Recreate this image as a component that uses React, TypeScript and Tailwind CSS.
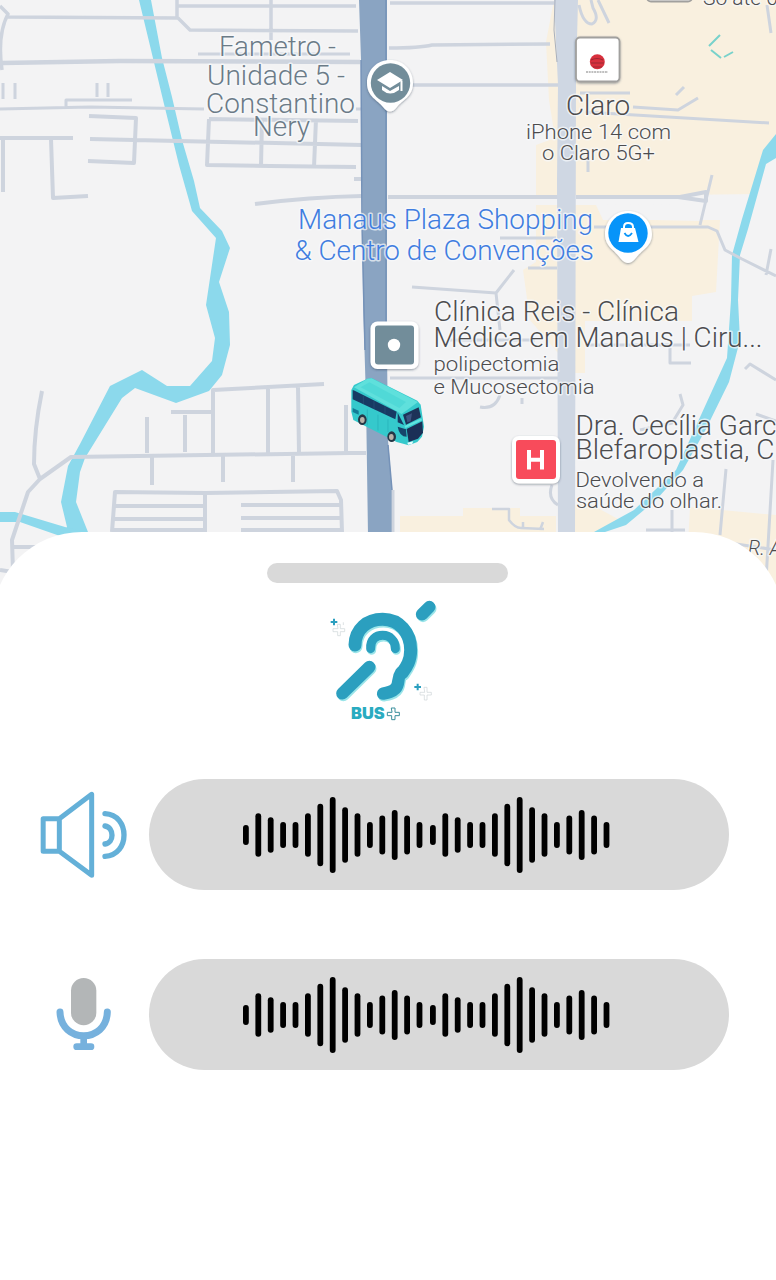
import React from "react";

type LabelProps = {
  x: number;
  y: number;
  w?: number;
  size?: number;
  tone?: "grey" | "blue" | "dark";
  children: string;
};

const TONES = { grey: "#6b7b87", blue: "#3f7de0", dark: "#4c4c4e" };

function Label({ x, y, w, size = 27, tone = "dark", children }: LabelProps) {
  return (
    <text
      x={x}
      y={y}
      fontSize={size}
      fontWeight={size > 22 ? 300 : 350}
      fill={TONES[tone]}
      stroke="#f8fafc"
      strokeWidth={3}
      strokeOpacity={0.7}
      strokeLinejoin="round"
      paintOrder="stroke"
      textLength={w}
      lengthAdjust="spacingAndGlyphs"
    >
      {children}
    </text>
  );
}

function Bus() {
  return (
    <g transform="translate(330 280) scale(.33333)" strokeLinejoin="round">
      <path d="M64 330 72 315 112 296 125 294 262 362 272 374 282 440 276 470 262 486 236 496 200 486 70 420 64 395Z" fill="#35c9cc" />
      <path d="M72 322 112 296 125 295 264 366 215 402Z" fill="#5fe0dc" />
      <path d="M92 322 118 307 228 366 208 384Z" fill="#50d9d7" />
      <path d="M68 330 74 332 200 395 196 418 68 358Z" fill="#173a63" />
      <path d="M100 348v24M132 363v24M165 379v22" stroke="#285079" strokeWidth="2" />
      <path d="M203 398 222 435 203 427Z" fill="#173a63" />
      <path d="M219 404 266 382 273 412 228 434Z" fill="#1d3358" />
      <path d="M228 408 246 400 242 424 232 427Z" fill="#3c5480" />
      <path d="M203 440 228 448 230 470Q208 470 203 440Z" fill="#16456b" />
      <path d="M230 447 277 424 279 458 264 476 236 486Z" fill="#1b2f56" />
      <path d="M225 441 275 418" stroke="#62e4df" strokeWidth="6" />
      <path d="M68 384 86 392v12l-18-8Z" fill="#147b96" />
      <path d="M112 388v48M144 404v48M174 418v38" stroke="#26aeb8" strokeWidth="2" />
      <path d="M232 488 250 484 246 493 234 494Z" fill="#e9ffff" />
      <ellipse cx="97" cy="419" rx="13" ry="16" fill="#263746" />
      <ellipse cx="97" cy="420" rx="7" ry="9" fill="#b9b2a8" />
      <ellipse cx="185" cy="470" rx="13" ry="16" fill="#263746" />
      <ellipse cx="184" cy="471" rx="7" ry="9" fill="#b9b2a8" />
    </g>
  );
}

function CityMap() {
  return (
    <svg className="block h-[600px] w-full" viewBox="0 0 776 600" fontFamily="Roboto, sans-serif">
      <defs>
        <filter id="shade" x="-30%" y="-30%" width="160%" height="160%">
          <feDropShadow dx="0" dy="1" stdDeviation="1.3" floodColor="#334155" floodOpacity=".5" />
        </filter>
      </defs>
      <rect width="776" height="600" fill="#f3f3f4" />

      {/* commercial areas */}
      <g fill="#f9f0df">
        <path d="M574 0H776V140L768 150 757 194 600 196H536V145L555 138 549 100 546 42 554 0Z" />
        <path d="M536 205H596L603 220H720L716 292 692 296V321H585V373H575L530 320 523 270 536 262Z" />
        <path d="M400 516H463V508H520V516H556V540H400Z" />
        <path d="M575 504H590L620 520 590 540H575Z" />
        <path d="M690 507 776 515V600H740L688 545Z" />
      </g>
      <path d="M600 205 700 204V221L605 219Z" fill="#f3f3f4" />

      {/* waterways */}
      <g fill="#8cd9ec">
        <path d="M139 0H151L162 58 172 97 182 140 194 181 200 208 222 231 230 248 219 282 229 312 230 345 222 375 209 391 176 403 135 388 122 398 85 458 80 472 76 502 88 532 62 535 67 527 61 502 68 466 80 444 110 386 142 370 167 386H190L212 361 215 338 206 305 216 238 192 211 179 165 164 104Z" />
        <path d="M0 512H15L65 527 88 533 60 536 20 522H0Z" />
        <path d="M776 134V158L766 164 748 229 740 255 738 300 740 340 729 382 706 429 683 470 656 500 626 525 596 535 594 532 634 510 676 470 701 415 727 358 731 300 732 255 742 219 763 150Z" />
      </g>

      {/* secondary streets */}
      <g fill="none" stroke="#ced4de" strokeWidth="4" strokeLinejoin="round">
        <path d="M0 6 8 14Q-3 35 2 70M8 17 178 18 190 30 358 31M177 0V18M178 6H356M271 0V40" strokeWidth="3.5" />
        <path d="M2 63 120 61 360 62" strokeWidth="4.5" />
        <path d="M198 54H350M3 83V99M15 83V99M97 83V97M108 83V97M66 107V100H132M0 109 90 107 204 109M356 109H362" strokeWidth="3" />
        <path d="M89 116 136 118 134 163 88 161M90 139 362 145M0 138H73M3 138V192M51 139 53 198 88 196M209 119 358 121M209 119 207 165 270 166 356 167M262 119 261 166M316 119 314 167M354 179H363" />
        <path d="M255 204Q310 197 362 196M388 197H560M576 197H680L706 192V201L678 197" />
        <path d="M390 3H555M389 48Q420 48 432 45L550 44M410 85H558" strokeWidth="3.5" />
        <path d="M412 287 496 293 514 270M496 293 500 330M450 340H535M390 378H560M500 395Q495 410 480 407M522 398V404" strokeWidth="3" />
        <path d="M579 5Q583 24 592 24Q600 20 593 8L591 0M598 0 609 23M580 93H630M585 112 769 123M633 107 678 110 698 98M676 95 684 87M588 150V172M767 5 771 33" strokeWidth="3" />
        <path d="M712 175 700 225M594 227H708L717 231 725 250 742 259 776 276M771 249 766 275M500 238H556M528 268H557" strokeWidth="3" />
        <path d="M585 345H690M670 348V363H691M745 369 750 364 776 380M680 394 683 405 672 423 640 430M756 414 776 421M552 485Q547 498 558 505M672 510V532M726 469 720 535M773 460 766 580M646 530H685M730 543 776 550" strokeWidth="3" />
        <path d="M42 391Q34 430 34 464L40 479M0 570 13 572 12 540 28 492 40 479 71 457 350 453M350 453H366M12 547H40" />
        <path d="M147 417V453M152 456V485M185 415V452M171 412H212M213 454V390L268 387 324 384M268 388V453M298 387 299 453M223 456V482M293 456V482M346 405V452" />
        <path d="M112 532 115 492 205 493 337 491 341 500 342 532M114 506H205M114 519H205M112 530H207M205 493V532M241 505H341M241 518H341M241 530H341" />
        <path d="M492 509H509L509 520Q515 528 521 528L544 529M543 522 540 530M523 522V529" strokeWidth="2.5" />
      </g>
      <path d="M709 46 720 35M711 50 721 58M724 57 733 52" stroke="#78d2cb" strokeWidth="2" fill="none" />

      {/* avenues */}
      <path d="M554 0H578L576 80 575 540H558L557 180 558 85Z" fill="#cfd7e3" />
      <path d="M555 0 554 30 557 62" fill="none" stroke="#a9b0bc" strokeWidth="1" />
      <path d="M359 0H387V350L388 440 392 490V535H368L366 400 363 300 361 60Z" fill="#8aa4c2" />
      <path d="M386 0V350M388 445 392 490V535M361 60 362 225 365 350" fill="none" stroke="#7592b8" strokeWidth="1.5" />
      <path d="M393 490V532" stroke="#ced4de" strokeWidth="3" />

      {/* labels */}
      <Label x={219} y={55.5} w={117} tone="grey">Fametro -</Label>
      <Label x={207} y={85} w={138} tone="grey">Unidade 5 -</Label>
      <Label x={206} y={112.5} w={149} tone="grey">Constantino</Label>
      <Label x={253} y={136} w={57} tone="grey">Nery</Label>
      <Label x={298} y={228.5} w={295} tone="blue">Manaus Plaza Shopping</Label>
      <Label x={294.5} y={260} w={299.5} tone="blue">&amp; Centro de Convenções</Label>
      <Label x={566} y={115} w={64}>Claro</Label>
      <Label x={526} y={138.5} w={145} size={21}>iPhone 14 com</Label>
      <Label x={542} y={160} w={113} size={21}>o Claro 5G+</Label>
      <Label x={434} y={321} w={245}>Clínica Reis - Clínica</Label>
      <Label x={433.5} y={347} w={329}>Médica em Manaus | Ciru...</Label>
      <Label x={433.5} y={370.5} w={126} size={21}>polipectomia</Label>
      <Label x={433.5} y={394} w={161} size={21}>e Mucosectomia</Label>
      <Label x={575.5} y={435} w={201}>Dra. Cecília Garc</Label>
      <Label x={575.5} y={458.5} w={199}>Blefaroplastia, C</Label>
      <Label x={575.5} y={486.5} w={128.5} size={21}>Devolvendo a</Label>
      <Label x={576} y={507.5} w={146} size={21}>saúde do olhar.</Label>
      <Label x={703} y={4.5} size={21}>Só até 0</Label>
      <g fontStyle="italic"><Label x={748} y={555} size={20}>R. A</Label></g>

      {/* university pin */}
      <g filter="url(#shade)">
        <path d="M390 60C377 60 367 70 367 83C367 97 378 100 383 107Q390 116 397 107C402 100 413 97 413 83C413 70 403 60 390 60Z" fill="#fff" />
      </g>
      <circle cx="390.5" cy="83" r="19.7" fill="#728d9a" />
      <path d="M377 80 390 72 403 80 390 88ZM382 86 390 91 399 86V90Q390 97 382 90Z" fill="#fff" />
      <path d="M401.5 81V91" stroke="#fff" strokeWidth="2" />

      {/* store marker */}
      <rect x="576" y="37.5" width="43.5" height="44" rx="4" fill="#fff" stroke="#a1a09e" strokeWidth="1.8" filter="url(#shade)" />
      <circle cx="597.3" cy="61.7" r="7.5" fill="#d8303d" />
      <path d="M591 60Q597 57 603 60M591 63H604M593 67H602" stroke="#9b2832" strokeWidth="1.2" fill="none" />
      <path d="M586 72H608" stroke="#aaa" strokeWidth="1.3" strokeDasharray="2 .7" />
      <rect x="647" y="-20" width="45" height="21.5" rx="4" fill="#eee" stroke="#a1a09e" strokeWidth="2" />

      {/* shopping pin */}
      <path d="M628 211C615 211 605 221 605 234C605 247 615 250 621 259Q628 267 635 259C641 250 652 247 652 234C652 221 641 211 628 211Z" fill="#fff" filter="url(#shade)" />
      <circle cx="628" cy="233" r="19.7" fill="#0794f9" />
      <path d="M621 228H635L638.5 242H618.5Z" fill="#fff" />
      <path d="M624 230V227Q624 223 628 223Q633 223 633 227V230" fill="none" stroke="#fff" strokeWidth="2" />
      <path d="M624.5 233Q628 239 632 233" fill="none" stroke="#0794f9" strokeWidth="1.8" />

      {/* clinic and hospital markers */}
      <rect x="370.5" y="321.5" width="48" height="47.5" rx="7" fill="#fff" filter="url(#shade)" />
      <rect x="375" y="325.5" width="39" height="39" rx="3" fill="#728d9a" />
      <circle cx="394" cy="345" r="6.2" fill="#fff" />
      <rect x="512" y="436" width="48" height="47.5" rx="7" fill="#fff" filter="url(#shade)" />
      <rect x="516" y="440" width="40" height="39" rx="3" fill="#f84b5b" />
      <path d="M529 450V469.500M542 450V469.500M529 459.700H542" stroke="#fff" strokeWidth="4" />
      <Bus />
    </svg>
  );
}

function EarMark() {
  return (
    <>
      <path d="M105 165C106 118 141 88 188 88C238 88 272 128 272 180C272 212 260 230 247 248" strokeWidth="39" />
      <path d="M243 248C230 267 240 282 226 296C216 306 205 308 189 311" strokeWidth="37" />
      <path d="M152 176C150 148 168 136 188 136C210 136 226 152 226 176" strokeWidth="27" />
      <path d="M67 310 148 231M306 73 328 51" strokeWidth="37" />
    </>
  );
}

function BusPlusLogo() {
  return (
    <svg className="h-[140px] w-[130px]" viewBox="0 0 390 420" fill="none" strokeLinecap="round">
      <g stroke="#9be5e9" transform="translate(3 5)">
        <EarMark />
      </g>
      <g stroke="#2b9fbf">
        <EarMark />
      </g>
      <path d="M42 86V106M32 96H52M293 281V301M283 291H303" stroke="#2b9fbf" strokeWidth="6" strokeLinecap="butt" />
      <path d="M53 103H61V116H74V125H61V137H53V125H39V116H53ZM70 98V104M313 292H321V307H334V315H321V330H313V315H300V307H313Z" stroke="#cbd3d6" strokeWidth="2" />
      <text x="93" y="387" fontFamily="Inter, sans-serif" fontWeight="900" fontSize="47" textLength="101" lengthAdjust="spacingAndGlyphs" fill="#29abc0">BUS</text>
      <path d="M215 354H225V367H238V377H225V389H215V377H202V367H215Z" stroke="#3a8f9c" strokeWidth="3" strokeLinejoin="round" />
    </svg>
  );
}

function SpeakerIcon() {
  return (
    <svg className="h-[111px] w-[110px]" viewBox="0 0 330 333" fill="none" stroke="#64b0d8" strokeWidth="15" strokeLinecap="round" strokeLinejoin="round">
      <path d="M69.500 119H118V217H69.500ZM118 119 215 46V289L118 217" />
      <path d="M255 104C331 107 331 229 255 232M255 141C283 146 283 191 255 195" strokeWidth="16" />
    </svg>
  );
}

function MicIcon() {
  return (
    <svg className="h-[111px] w-[110px]" viewBox="0 0 330 333" fill="none" stroke="#76b1dd" strokeLinecap="round">
      <rect x="153" y="57" width="76" height="142" rx="38" fill="#b3b6b7" stroke="none" />
      <path d="M120 159C123 254 259 254 262 159" strokeWidth="21" />
      <path d="M191 232V260M170 263H213" strokeWidth="20" />
    </svg>
  );
}

const PATTERN = [20, 43.500, 35.500, 26, 26, 43.500, 62.500, 76, 55.500, 43.500, 26, 39, 50, 39, 26];

function Waveform() {
  return (
    <svg className="h-[111px] w-[390px]" viewBox="0 0 390 111" fill="#000">
      {[0, 1].map((group) =>
        PATTERN.map((h, i) => (
          <rect key={`${group}-${i}`} x={13 + group * 187 + i * 12.4} y={56 - h / 2} width="5.8" height={h} rx="2.9" />
        ))
      )}
    </svg>
  );
}

function AudioRow({ icon }: { icon: React.ReactNode }) {
  return (
    <div className="flex w-full items-center pl-5">
      <div className="w-[110px] shrink-0">{icon}</div>
      <div className="ml-[18.5px] flex h-[111px] w-[580.5px] shrink-0 justify-center rounded-full bg-[#d9d9d9]">
        <div className="mr-[28px]">
          <Waveform />
        </div>
      </div>
    </div>
  );
}

export default function App() {
  return (
    <main className="flex h-[1280px] w-full flex-col overflow-hidden bg-white">
      <CityMap />
      <section className="relative -mx-2 -mt-[68px] flex flex-1 flex-col rounded-t-[90px] bg-white px-2">
        <div className="ml-[267px] mt-[31px] h-5 w-[241px] shrink-0 rounded-full bg-[#d9d9d9]" />
        <div className="ml-[320px] mt-[7px] h-[140px] shrink-0">
          <BusPlusLogo />
        </div>
        <div className="mt-[49px] flex flex-col gap-[69px]">
          <AudioRow icon={<SpeakerIcon />} />
          <AudioRow icon={<MicIcon />} />
        </div>
      </section>
    </main>
  );
}
